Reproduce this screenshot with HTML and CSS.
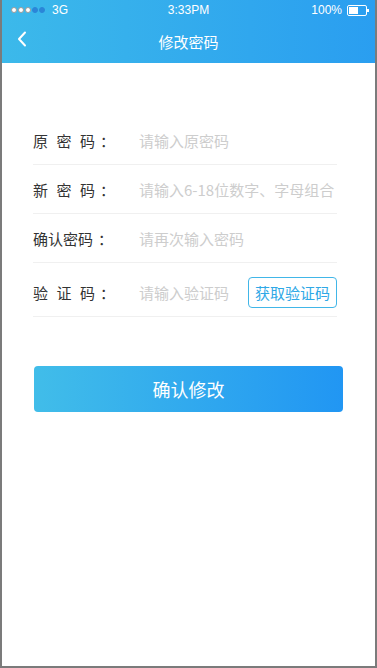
FILE: index.html
```html
<!DOCTYPE html>
<html lang="zh-CN">
<head>
    <meta charset="UTF-8">
    <meta name="viewport" content="width=device-width, initial-scale=1.0">
    <title>修改密码</title>
    <link rel="stylesheet" href="styles.css">
</head>
<body>
    <div class="page">
        <!-- Header -->
        <div class="header">
            <div class="status-bar">
                <div class="status-left">
                    <span class="signal">
                        <i class="dot"></i><i class="dot"></i><i class="dot"></i><i class="dot on"></i><i class="dot on"></i>
                    </span>
                    <span>3G</span>
                </div>
                <div class="status-time">3:33PM</div>
                <div class="status-right">
                    <span>100%</span>
                    <span class="battery"><i class="battery-fill"></i></span>
                </div>
            </div>
            <div class="nav-bar">
                <a class="back-btn" href="#">
                    <svg width="10" height="16" viewBox="0 0 10 16">
                        <path d="M8 1.5 L2 8 L8 14.5" fill="none" stroke="#fff" stroke-width="2" stroke-linecap="round" stroke-linejoin="round"/>
                    </svg>
                </a>
                <h1 class="nav-title">修改密码</h1>
            </div>
        </div>

        <!-- Form -->
        <form class="pwd-form">
            <div class="form-row">
                <label class="form-label"><span class="justify">原密码</span><span class="colon">：</span></label>
                <input class="form-input" type="password" placeholder="请输入原密码">
            </div>
            <div class="form-row">
                <label class="form-label"><span class="justify">新密码</span><span class="colon">：</span></label>
                <input class="form-input" type="password" placeholder="请输入6-18位数字、字母组合">
            </div>
            <div class="form-row">
                <label class="form-label">确认密码<span class="colon">：</span></label>
                <input class="form-input" type="password" placeholder="请再次输入密码">
            </div>
            <div class="form-row code-row">
                <label class="form-label"><span class="justify">验证码</span><span class="colon">：</span></label>
                <input class="form-input" type="text" placeholder="请输入验证码">
                <button class="code-btn" type="button">获取验证码</button>
            </div>

            <button class="submit-btn" type="button">确认修改</button>
        </form>
    </div>
</body>
</html>
```

FILE: styles.css
```css
* {
    box-sizing: border-box;
}

body {
    margin: 0;
    padding: 0;
    font-family: "Liberation Sans", "Noto Sans CJK SC", sans-serif;
    background: #fff;
}

.page {
    width: 377px;
    height: 668px;
    border: 2px solid #7b7b7b;
    border-top: none;
    background: #fff;
}

/* Header */
.header {
    background: linear-gradient(90deg, #3cb9ea 0%, #2a9ef0 100%);
    color: #fff;
}

.status-bar {
    height: 20px;
    display: flex;
    align-items: center;
    justify-content: space-between;
    padding: 0 5px 0 9px;
    font-size: 12px;
    position: relative;
}

.status-left,
.status-right {
    display: flex;
    align-items: center;
    gap: 5px;
}

.status-left {
    gap: 7px;
}

.signal {
    display: flex;
    gap: 1px;
}

.signal .dot {
    width: 6px;
    height: 6px;
    border-radius: 50%;
    background: #fff;
    border: 1px solid #9a9a9a;
}

.signal .dot.on {
    background: #2a86d8;
    border-color: #2a86d8;
}

.status-time {
    position: absolute;
    left: 0;
    right: 0;
    text-align: center;
    pointer-events: none;
}

.battery {
    position: relative;
    width: 20px;
    height: 11px;
    border: 1px solid #fff;
    border-radius: 2px;
    padding: 1px;
    margin-right: 3px;
}

.battery::after {
    content: "";
    position: absolute;
    right: -3px;
    top: 3px;
    width: 2px;
    height: 3px;
    background: #fff;
}

.battery-fill {
    display: block;
    width: 9px;
    height: 100%;
    background: #fff;
}

.nav-bar {
    height: 43px;
    display: flex;
    align-items: center;
    justify-content: center;
    position: relative;
}

.back-btn {
    position: absolute;
    left: 15px;
    top: 11px;
    display: flex;
}

.nav-title {
    margin: 0;
    font-family: "Noto Sans CJK SC", sans-serif;
    font-size: 15px;
    font-weight: 400;
}

/* Form */
.pwd-form {
    margin: 53px 38px 0 31px;
    font-family: "Noto Sans CJK SC", sans-serif;
}

.form-row {
    display: flex;
    align-items: center;
    height: 49px;
    border-bottom: 1px solid #f0f0f0;
}

.form-label {
    width: 106px;
    flex-shrink: 0;
    font-size: 15px;
    color: #333;
}

.form-label .justify {
    display: inline-block;
    width: 62px;
    text-align: justify;
    text-align-last: justify;
}

.form-label .colon {
    margin-left: 5px;
}

.form-input {
    flex: 1;
    min-width: 0;
    border: none;
    outline: none;
    padding: 0;
    font-family: inherit;
    font-size: 15px;
    color: #333;
    background: transparent;
}

.form-input::placeholder {
    color: #cdcdcd;
}

.code-row {
    height: 54px;
    padding: 5px 0 0;
}

.code-btn {
    flex-shrink: 0;
    width: 89px;
    height: 31px;
    padding: 0;
    border: 1px solid #41b6e8;
    border-radius: 4px;
    background: #fff;
    color: #2fa8e6;
    font-family: inherit;
    font-size: 15px;
}

.submit-btn {
    display: block;
    width: 309px;
    height: 46px;
    margin: 49px 0 0 1px;
    border: none;
    border-radius: 4px;
    background: linear-gradient(90deg, #41bde9 0%, #2196f3 100%);
    color: #fff;
    font-family: inherit;
    font-size: 18px;
}
```
